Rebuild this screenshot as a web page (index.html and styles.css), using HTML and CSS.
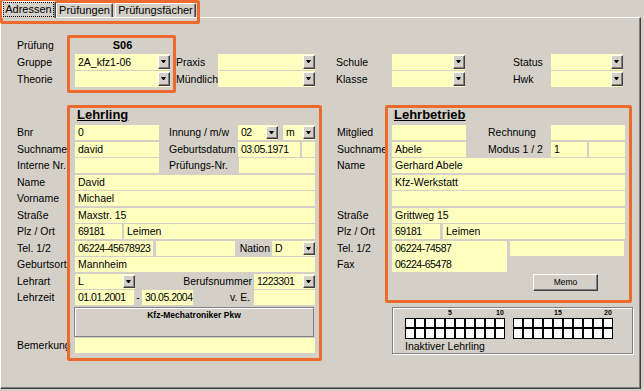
FILE: index.html
```html
<!DOCTYPE html>
<html lang="de">

<head>
    <meta charset="UTF-8">
    <meta name="viewport" content="width=device-width, initial-scale=1.0">
    <title>Adressen</title>
    <link rel="stylesheet" href="styles.css">
</head>

<body>
    <div class="window">
        <!-- Reiter -->
        <div class="tabs">
            <div class="tab active"><span>Adressen</span></div>
            <div class="tab t2">Prüfungen</div>
            <div class="tab t3">Prüfungsfächer</div>
        </div>

        <div class="panel">
            <!-- Prüfung / Gruppe -->
            <div class="top">
                <div class="lbl">Prüfung</div>
                <div class="s06">S06</div>

                <div class="lbl first">Gruppe</div>
                <div class="f cb"><span>2A_kfz1-06</span><i></i></div>
                <div class="lbl p6">Praxis</div>
                <div class="f cb"><span></span><i></i></div>
                <div class="lbl p21">Schule</div>
                <div class="f cb"><span></span><i></i></div>
                <div class="lbl p48">Status</div>
                <div class="f cb"><span></span><i></i></div>

                <div class="lbl first">Theorie</div>
                <div class="f cb"><span></span><i></i></div>
                <div class="lbl p6">Mündlich</div>
                <div class="f cb"><span></span><i></i></div>
                <div class="lbl p21">Klasse</div>
                <div class="f cb"><span></span><i></i></div>
                <div class="lbl p48">Hwk</div>
                <div class="f cb"><span></span><i></i></div>
            </div>

            <div class="main">
                <!-- Lehrling -->
                <div class="left">
                    <div class="head">Lehrling</div>
                    <div class="rows">
                        <div class="row">
                            <div class="lbl">Bnr</div>
                            <div class="f w84 num">0</div>
                            <div class="lbl w79 p10">Innung / m/w</div>
                            <div class="f cb w40 num"><span>02</span><i></i></div>
                            <div class="f cb w32 ml5"><span>m</span><i></i></div>
                        </div>
                        <div class="row">
                            <div class="lbl">Suchname</div>
                            <div class="f w84">david</div>
                            <div class="lbl w79 p10">Geburtsdatum</div>
                            <div class="f w62 num">03.05.1971</div>
                            <div class="f w13 ml2"></div>
                        </div>
                        <div class="row">
                            <div class="lbl">Interne Nr.</div>
                            <div class="f w84"></div>
                            <div class="lbl w80 p10">Prüfungs-Nr.</div>
                            <div class="f w76"></div>
                        </div>
                        <div class="row">
                            <div class="lbl">Name</div>
                            <div class="f w240">David</div>
                        </div>
                        <div class="row">
                            <div class="lbl">Vorname</div>
                            <div class="f w240">Michael</div>
                        </div>
                        <div class="row">
                            <div class="lbl">Straße</div>
                            <div class="f w240">Maxstr. 15</div>
                        </div>
                        <div class="row">
                            <div class="lbl">Plz / Ort</div>
                            <div class="f w47 num">69181</div>
                            <div class="f w191 ml2">Leimen</div>
                        </div>
                        <div class="row">
                            <div class="lbl">Tel. 1/2</div>
                            <div class="f w78 num">06224-45678923</div>
                            <div class="f w79 ml3"></div>
                            <div class="lbl w37 right">Nation</div>
                            <div class="f cb w43"><span>D</span><i></i></div>
                        </div>
                        <div class="row">
                            <div class="lbl">Geburtsort</div>
                            <div class="f w240">Mannheim</div>
                        </div>
                        <div class="row">
                            <div class="lbl">Lehrart</div>
                            <div class="f cb w60"><span>L</span><i></i></div>
                            <div class="lbl w119 right pr5">Berufsnummer</div>
                            <div class="f cb w61 num"><span>1223301</span><i></i></div>
                        </div>
                        <div class="row">
                            <div class="lbl">Lehrzeit</div>
                            <div class="f w59 num">01.01.2001</div>
                            <div class="lbl w8 center">-</div>
                            <div class="f w51 num">30.05.2004</div>
                            <div class="lbl w61 p37">v. E.</div>
                            <div class="f w61"></div>
                        </div>
                        <div class="row tall">
                            <div class="lbl"></div>
                            <div class="kfz">Kfz-Mechatroniker Pkw</div>
                        </div>
                        <div class="row">
                            <div class="lbl">Bemerkung</div>
                            <div class="f w240"></div>
                        </div>
                    </div>
                </div>

                <!-- Lehrbetrieb -->
                <div class="right-col">
                    <div class="head hb">Lehrbetrieb</div>
                    <div class="rows">
                        <div class="row">
                            <div class="lbl lb">Mitglied</div>
                            <div class="f w74"></div>
                            <div class="lbl w85 p22">Rechnung</div>
                            <div class="f w74"></div>
                        </div>
                        <div class="row">
                            <div class="lbl lb">Suchname</div>
                            <div class="f w74">Abele</div>
                            <div class="lbl w85 p22">Modus 1 / 2</div>
                            <div class="f w36 num">1</div>
                            <div class="f w36 ml2"></div>
                        </div>
                        <div class="row">
                            <div class="lbl lb">Name</div>
                            <div class="f w233">Gerhard Abele</div>
                        </div>
                        <div class="row">
                            <div class="lbl lb"></div>
                            <div class="f w233">Kfz-Werkstatt</div>
                        </div>
                        <div class="row">
                            <div class="lbl lb"></div>
                            <div class="f w233"></div>
                        </div>
                        <div class="row">
                            <div class="lbl lb">Straße</div>
                            <div class="f w233">Grittweg 15</div>
                        </div>
                        <div class="row">
                            <div class="lbl lb">Plz / Ort</div>
                            <div class="f w48 num">69181</div>
                            <div class="f w182 ml3">Leimen</div>
                        </div>
                        <div class="row">
                            <div class="lbl lb">Tel. 1/2</div>
                            <div class="f w115 join num">06224-74587</div>
                            <div class="f w114 ml3"></div>
                        </div>
                        <div class="row">
                            <div class="lbl lb">Fax</div>
                            <div class="f w115 num">06224-65478</div>
                        </div>
                        <div class="row memo-row">
                            <div class="btn">Memo</div>
                        </div>
                    </div>

                    <!-- Inaktiv -->
                    <div class="group">
                        <div class="boxes">
                            <div class="set">
                                <div class="nums"><span class="n5">5</span><span class="n10">10</span></div>
                                <div class="cells">
                                    <b></b><b></b><b></b><b></b><b></b><b></b><b></b><b></b><b></b><b></b>
                                    <b></b><b></b><b></b><b></b><b></b><b></b><b></b><b></b><b></b><b></b>
                                </div>
                            </div>
                            <div class="set">
                                <div class="nums"><span class="n5">15</span><span class="n10">20</span></div>
                                <div class="cells">
                                    <b></b><b></b><b></b><b></b><b></b><b></b><b></b><b></b><b></b><b></b>
                                    <b></b><b></b><b></b><b></b><b></b><b></b><b></b><b></b><b></b><b></b>
                                </div>
                            </div>
                        </div>
                        <div class="inaktiv">Inaktiver Lehrling</div>
                    </div>
                </div>
            </div>
        </div>

        <!-- Markierungen -->
        <div class="mark m1"></div>
        <div class="mark m2"></div>
        <div class="mark m3"></div>
        <div class="mark m4"></div>
    </div>
</body>

</html>
```

FILE: styles.css
```css
* {
    margin: 0;
    padding: 0;
    box-sizing: border-box;
}

body {
    background-color: #d4d0c8;
    font-family: "Liberation Sans", Arial, sans-serif;
    font-size: 10.5px;
    color: #000;
}

.window {
    position: relative;
    width: 644px;
    height: 391px;
    overflow: hidden;
}

/* Reiter */
.tabs {
    display: flex;
    align-items: flex-end;
    height: 18px;
    padding-left: 2px;
    font-size: 11px;
}

.tab {
    height: 14px;
    margin-bottom: 1px;
    line-height: 13px;
    text-align: center;
    border-top: 1px solid #fff;
    border-left: 1px solid #fff;
    border-right: 1px solid #404040;
    box-shadow: inset -1px 0 #808080;
    border-radius: 2px 2px 0 0;
}

.tab.active {
    position: relative;
    z-index: 1;
    width: 54px;
    height: 17px;
    margin-bottom: 0;
    padding: 1px 2px 0 1px;
    background-color: #d4d0c8;
}

.tab.active span {
    display: block;
    line-height: 13px;
    outline: 1px dotted #000;
}

.t2 {
    width: 57px;
}

.t3 {
    width: 81px;
    margin-left: 2px;
}

.panel {
    margin-top: -1px;
    width: 641px;
    height: 372px;
    padding-top: 19px;
    border: 1px solid;
    border-color: #fff #404040 #404040 #fff;
    box-shadow: inset -1px -1px #808080;
}

/* oberer Block */
.top {
    display: grid;
    grid-template-columns: 58px 95px 48px 97px 77px 73px 86px 72px;
    grid-auto-rows: 16px;
    row-gap: 1px;
    padding-left: 16px;
    line-height: 16px;
}

.top .first {
    grid-column: 1;
}

.s06 {
    font-weight: bold;
    text-align: center;
    font-size: 11px;
}

.lbl {
    flex-shrink: 0;
    width: 58px;
    white-space: nowrap;
}

.p6 { padding-left: 6px; }
.p10 { padding-left: 10px; }
.p21 { padding-left: 21px; }
.p22 { padding-left: 22px; }
.p37 { padding-left: 37px; }
.p48 { padding-left: 48px; }
.pr5 { padding-right: 5px; }
.right { text-align: right; padding-right: 2px; }
.center { text-align: center; }

.ml2 { margin-left: 2px; }
.ml3 { margin-left: 3px; }
.ml5 { margin-left: 5px; }

/* Felder */
.f {
    flex-shrink: 0;
    background-color: #ffffc0;
    padding-left: 3px;
    white-space: nowrap;
    overflow: hidden;
}

.num {
    letter-spacing: -0.5px;
}

.cb {
    display: flex;
}

.cb span {
    flex: 1;
    overflow: hidden;
}

.cb i {
    position: relative;
    width: 12px;
    margin: 1px 0;
    background-color: #d4d0c8;
    border: 1px solid;
    border-color: #fff #404040 #404040 #fff;
    box-shadow: inset -1px -1px #808080;
}

.cb i::after {
    content: "";
    position: absolute;
    left: 2px;
    top: 4px;
    width: 1px;
    height: 0;
    border-top: 3px solid #000;
    border-left: 2px solid transparent;
    border-right: 2px solid transparent;
}

.w8 { width: 8px; }
.w13 { width: 13px; }
.w32 { width: 32px; }
.w36 { width: 36px; }
.w37 { width: 37px; }
.w40 { width: 40px; }
.w43 { width: 43px; }
.w47 { width: 47px; }
.w48 { width: 48px; }
.w51 { width: 51px; }
.w59 { width: 59px; }
.w60 { width: 60px; }
.w61 { width: 61px; }
.w62 { width: 62px; }
.w74 { width: 74px; }
.w76 { width: 76px; }
.w78 { width: 78px; }
.w79 { width: 79px; }
.w80 { width: 80px; }
.w84 { width: 84px; }
.w85 { width: 85px; }
.w114 { width: 114px; }
.w115 { width: 115px; }
.w119 { width: 119px; }
.w182 { width: 182px; }
.w191 { width: 191px; }
.w233 { width: 233px; }
.w240 { width: 240px; }

/* Hauptbereich */
.main {
    display: flex;
    margin-top: 19px;
    padding-left: 16px;
}

.left {
    width: 298px;
}

.right-col {
    width: 296px;
    margin-left: 22px;
}

.head {
    height: 17px;
    margin-bottom: 2px;
    padding-left: 60px;
    font-size: 13px;
    font-weight: bold;
    line-height: 17px;
    text-decoration: underline;
}

.head.hb {
    padding-left: 57px;
}

.rows {
    display: flex;
    flex-direction: column;
    gap: 1.5px;
}

.row {
    display: flex;
    height: 15px;
    line-height: 15px;
}

.row.tall {
    height: 30px;
}

.lbl.lb {
    width: 55px;
}

.join {
    box-shadow: 0 2px 0 #ffffc0;
}

.kfz {
    width: 240px;
    margin-left: -1px;
    padding-top: 2px;
    font-size: 8.5px;
    font-weight: bold;
    line-height: 10px;
    text-align: center;
    border: 1px solid #808080;
    box-shadow: inset 1px 1px #fff;
}

.memo-row {
    height: 17px;
}

.btn {
    width: 65px;
    height: 17px;
    margin-left: 196px;
    font-size: 8.5px;
    line-height: 15px;
    text-align: center;
    border: 1px solid;
    border-color: #fff #404040 #404040 #fff;
    box-shadow: inset -1px -1px #808080;
}

/* Inaktiver Lehrling */
.group {
    width: 241px;
    height: 47px;
    margin: 16px 0 0 55px;
    padding-left: 12px;
    border: 1px solid #808080;
    box-shadow: inset 1px 1px #fff, 1px 1px #fff;
}

.boxes {
    display: flex;
    gap: 8px;
}

.nums,
.cells {
    display: grid;
    grid-template-columns: repeat(10, 10px);
}

.nums {
    height: 10px;
    font-size: 7px;
    font-weight: bold;
    line-height: 9px;
}

.nums span {
    text-align: center;
    white-space: nowrap;
}

.n5 { grid-column: 5; }
.n10 { grid-column: 10; }

.cells {
    grid-auto-rows: 10.5px;
}

.cells b {
    background-color: #fff;
    border: 1px solid #000;
}

.inaktiv {
    margin-top: 1px;
    line-height: 12px;
}

/* orange Markierungen */
.mark {
    position: absolute;
    border: 3px solid #ec6a2e;
    border-radius: 2px;
}

.m1 { left: 0; top: 0; width: 200px; height: 24px; }
.m2 { left: 67px; top: 35px; width: 109px; height: 58px; }
.m3 { left: 67px; top: 105px; width: 255px; height: 256px; }
.m4 { left: 385px; top: 105px; width: 247px; height: 198px; }
```
